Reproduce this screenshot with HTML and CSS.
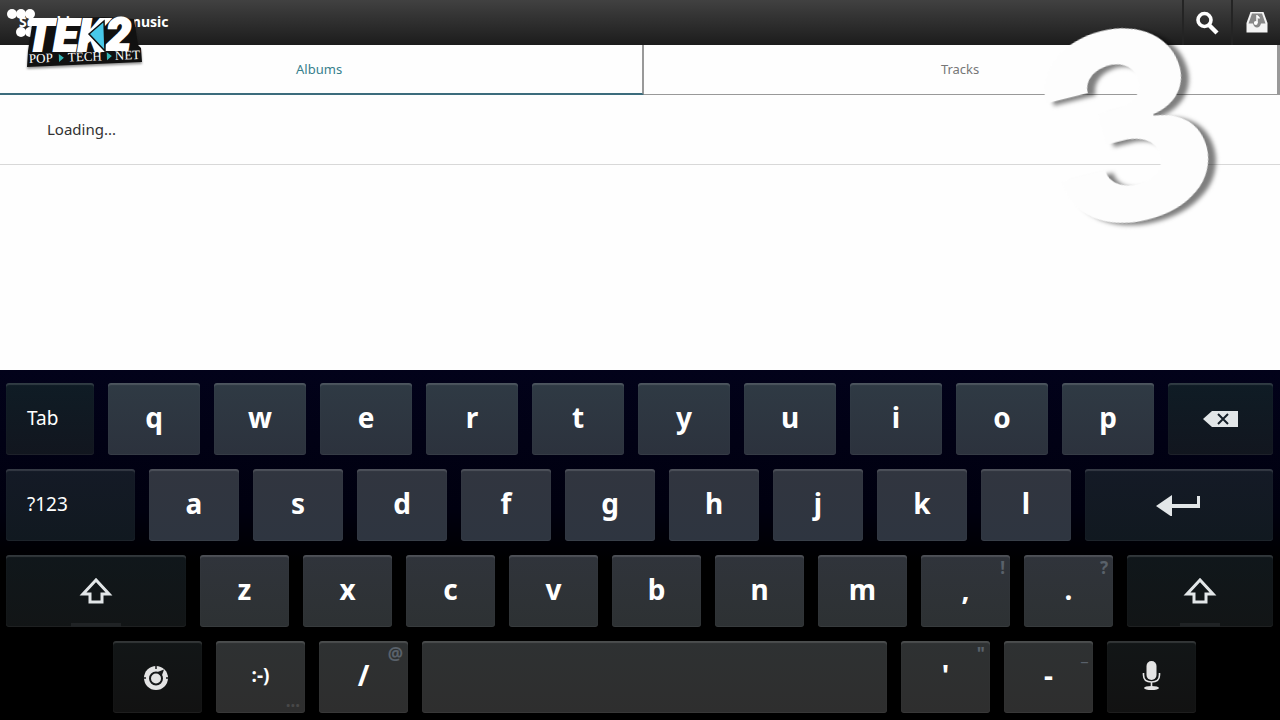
FILE: index.html
```html
<!DOCTYPE html>
<html lang="en">
<head>
  <meta charset="UTF-8">
  <meta name="viewport" content="width=device-width, initial-scale=1.0">
  <title>Music</title>
  <link rel="stylesheet" href="styles.css">
</head>
<body>
  <header class="topbar">
    <h1>Searching your music</h1>
    <button class="action" aria-label="Search">
      <svg width="26" height="26" viewBox="0 0 26 26"><circle cx="9.500" cy="10" r="6.5" fill="none" stroke="#fff" stroke-width="3.6"/><path d="M14 15l8 8" stroke="#fff" stroke-width="4.5"/></svg>
    </button>
    <button class="action" aria-label="Library">
      <svg width="22" height="22" viewBox="0 0 22 22"><path d="M4.500 0h13l4 11v9.500h-21V11z" fill="#f4f4f4"/><path d="M6 1.500h10l3.500 10H15q-1 4-4 4t-4-4H2.500z" fill="#888"/><path d="M11 3v8M11 3.500l2.500 3" stroke="#fff" stroke-width="1.500" fill="none"/><circle cx="9.800" cy="11" r="1.900" fill="#fff"/></svg>
    </button>
  </header>

  <nav class="tabs">
    <button class="tab active">Albums</button>
    <button class="tab">Tracks</button>
  </nav>

  <main class="list">
    <p class="item">Loading...</p>
  </main>

  <section class="keyboard" aria-label="Keyboard">
    <div class="row">
      <button class="key dark word w88">Tab</button>
      <button class="key w92">q</button>
      <button class="key w92">w</button>
      <button class="key w92">e</button>
      <button class="key w92">r</button>
      <button class="key w92">t</button>
      <button class="key w92">y</button>
      <button class="key w92">u</button>
      <button class="key w92">i</button>
      <button class="key w92">o</button>
      <button class="key w92">p</button>
      <button class="key dark w105" aria-label="Backspace">
        <svg width="36" height="18" viewBox="0 0 36 18"><path d="M0 9L9 1h26v16H9z" fill="#e2e6e8"/><path d="M15 4l10 10M25 4L15 14" stroke="#16202a" stroke-width="2"/></svg>
      </button>
    </div>
    <div class="row row-2">
      <button class="key dark word w129">?123</button>
      <button class="key w90">a</button>
      <button class="key w90">s</button>
      <button class="key w90">d</button>
      <button class="key w90">f</button>
      <button class="key w90">g</button>
      <button class="key w90">h</button>
      <button class="key w90">j</button>
      <button class="key w90">k</button>
      <button class="key w90">l</button>
      <button class="key dark w188" aria-label="Enter">
        <svg width="46" height="22" viewBox="0 0 46 22"><path d="M0 12L16 1v9h25V2h3v12H16v9z" fill="#e2e6e8"/></svg>
      </button>
    </div>
    <div class="row row-3">
      <button class="key dark shift w180" aria-label="Shift">
        <svg width="34" height="28" viewBox="0 0 34 28"><path d="M17 3L4 17h7v8h12v-8h7z" fill="none" stroke="#e2e6e8" stroke-width="3"/></svg>
      </button>
      <button class="key w89">z</button>
      <button class="key w89">x</button>
      <button class="key w89">c</button>
      <button class="key w89">v</button>
      <button class="key w89">b</button>
      <button class="key w89">n</button>
      <button class="key w89">m</button>
      <button class="key w89">,<span class="hint">!</span></button>
      <button class="key w89">.<span class="hint">?</span></button>
      <button class="key dark shift w146" aria-label="Shift">
        <svg width="34" height="28" viewBox="0 0 34 28"><path d="M17 3L4 17h7v8h12v-8h7z" fill="none" stroke="#e2e6e8" stroke-width="3"/></svg>
      </button>
    </div>
    <div class="row row-4">
      <button class="key dark w89" aria-label="Input settings">
        <svg width="30" height="26" viewBox="0 0 30 26"><circle cx="13" cy="14" r="12" fill="#e4e4e4"/><circle cx="13" cy="14.500" r="6" fill="none" stroke="#181a1b" stroke-width="2"/><path d="M14.500 8l6.500-2.500-2.500 7z" fill="#181a1b"/><path d="M13 1v4M0 14h3M23 14h3" stroke="#181a1b" stroke-width="1.500"/></svg>
      </button>
      <button class="key smiley w89">:-)<span class="hint low">...</span></button>
      <button class="key w89">/<span class="hint">@</span></button>
      <button class="key w465" aria-label="Space"></button>
      <button class="key w89">'<span class="hint">"</span></button>
      <button class="key w89">-<span class="hint">_</span></button>
      <button class="key dark w89" aria-label="Voice input">
        <svg width="20" height="32" viewBox="0 0 20 32"><rect x="4.500" y="0" width="10" height="19" rx="5" fill="#e4e4e4"/><path d="M1.500 12v2q0 7 8 7t8-7v-2M9.500 21v5" fill="none" stroke="#e4e4e4" stroke-width="1.600"/><ellipse cx="9.500" cy="27" rx="7.500" ry="2" fill="#e4e4e4"/></svg>
      </button>
    </div>
  </section>

  <!-- channel logo over the top bar -->
  <svg class="logo" width="150" height="75" viewBox="0 0 150 75" role="img" aria-label="TEK2 Pop Tech Net">
    <g fill="#fff">
      <circle cx="12" cy="14" r="5"/><circle cx="21" cy="14" r="5"/><circle cx="30" cy="14" r="5"/><circle cx="21" cy="32" r="5"/><circle cx="30" cy="32" r="5"/>
    </g>
    <path class="plate" d="M33 19L104 17l30 2 4 26 3 3 1 14-115 5 1-16z"/>
    <text class="logo-name" x="26" y="51">TEK</text>
    <text class="logo-name" x="106" y="50">2</text>
    <path d="M89 34L104 21l1 30z" fill="#48c8e8" stroke="#111" stroke-width="1.500"/>
    <g transform="rotate(-2 85 60)">
      <text class="logo-tag" x="29" y="61">POP</text>
      <text class="logo-tag" x="68" y="61">TECH</text>
      <text class="logo-tag" x="115" y="61">NET</text>
      <path d="M59 53l5 4-5 4zM107 53l5 4-5 4z" fill="#35b5b5"/>
    </g>
  </svg>

  <svg class="count" width="210" height="220" viewBox="0 0 210 220">
    <text class="count-digit" x="20" y="200" transform="rotate(-14 105 110)">3</text>
  </svg>
</body>
</html>
```
FILE: styles.css
```css
* {
  box-sizing: border-box;
}

body {
  margin: 0;
  min-height: 100vh;
  display: flex;
  flex-direction: column;
  font-family: "Noto Sans", "Open Sans", sans-serif;
  background: #fefefe;
  color: #333;
  position: relative;
  overflow: hidden;
}

button {
  font-family: inherit;
  border: none;
  padding: 0;
  cursor: pointer;
}

.topbar {
  height: 45px;
  display: flex;
  align-items: stretch;
  background: linear-gradient(#414141, #1c1c1c);
}

.topbar h1 {
  flex: 1;
  margin: 0;
  padding-left: 19px;
  font-size: 14px;
  line-height: 44px;
  color: #fff;
}

.action {
  width: 49px;
  display: flex;
  align-items: center;
  justify-content: center;
  background: transparent;
  border-left: 2px solid #242424;
}

.tabs {
  display: flex;
  height: 50px;
  box-shadow: inset -3px 0 #999;
}

.tab {
  flex: 1;
  padding: 0 4px 2px 0;
  background: transparent;
  border-bottom: 1px solid #999;
  font-size: 13px;
  color: #777;
}

.tab.active {
  flex: 1.01;
  padding-bottom: 1px;
  color: #37808c;
  border-right: 2px solid #999;
  border-bottom: 2px solid #3c6c7c;
}

.list {
  flex: 1;
}

.item {
  margin: 0;
  padding: 0 47px;
  font-size: 15px;
  line-height: 69px;
  border-bottom: 1px solid #d8d8d8;
}

.keyboard {
  display: flex;
  flex-direction: column;
  gap: 14px;
  padding: 13px 7px 7px 6px;
  background: linear-gradient(#02021a, #00000f 40%, #000 55%);
}

.row {
  display: flex;
  gap: 14px;
  --top: #2f3a44;
  --bottom: #2c323d;
  --dark-top: #0f1c25;
  --dark-bottom: #12161f;
}

.row-2 {
  --top: #31353f;
  --bottom: #2e3540;
  --dark-top: #141a26;
  --dark-bottom: #111920;
}

.row-3 {
  --top: #30343b;
  --bottom: #2d3133;
  --dark-top: #10171b;
  --dark-bottom: #121516;
}

.row-4 {
  padding: 0 77px 0 107px;
  --top: #2e3132;
  --bottom: #2e2e2e;
  --dark-top: #121617;
  --dark-bottom: #121212;
}

.key {
  position: relative;
  min-width: 0;
  height: 72px;
  padding-bottom: 4px;
  display: flex;
  align-items: center;
  justify-content: center;
  border-radius: 3px;
  background: linear-gradient(var(--top), var(--bottom));
  box-shadow: inset 0 2px 1px rgba(255, 255, 255, 0.14), inset 0 -1px 1px rgba(255, 255, 255, 0.06);
  color: #fff;
  font-size: 28px;
  font-weight: 700;
}

.key.dark {
  padding-bottom: 1px;
  background: linear-gradient(var(--dark-top), var(--dark-bottom));
}

.key.word {
  justify-content: flex-start;
  padding-bottom: 3px;
  text-indent: 21px;
  font-size: 19px;
  font-weight: 400;
}

.key.smiley {
  font-size: 19px;
}

.key.shift::after {
  content: "";
  position: absolute;
  bottom: 0;
  left: 36%;
  width: 28%;
  height: 4px;
  background: #202325;
}

/* key widths, shared out in proportion */
.w88 { flex: 88 1 0; }
.w89 { flex: 89 1 0; }
.w90 { flex: 90 1 0; }
.w92 { flex: 92 1 0; }
.w105 { flex: 105 1 0; }
.w129 { flex: 129 1 0; }
.w146 { flex: 146 1 0; }
.w180 { flex: 180 1 0; }
.w188 { flex: 188 1 0; }
.w465 { flex: 465 1 0; }

.hint {
  position: absolute;
  top: 1px;
  right: 5px;
  font-size: 17px;
  line-height: 24px;
  color: #59616a;
}

.hint.low {
  top: auto;
  bottom: 0;
  color: #484848;
}

.logo {
  position: absolute;
  top: 0;
  left: 0;
}

.plate {
  fill: #111;
  filter: drop-shadow(0 2px 1px rgba(0, 0, 0, 0.4));
}

.logo-name {
  font: italic 900 45px "Roboto", sans-serif;
  fill: #fff;
  stroke: #fff;
  stroke-width: 2px;
}

.logo-tag {
  font: 13px "Liberation Serif", serif;
  fill: #fff;
}

.count {
  position: absolute;
  top: 20px;
  right: 50px;
  overflow: visible;
}

.count-digit {
  font: 800 260px "Inter", sans-serif;
  fill: #fdfdfd;
  filter: drop-shadow(7px 4px 2px rgba(0, 0, 0, 0.5));
}
```
